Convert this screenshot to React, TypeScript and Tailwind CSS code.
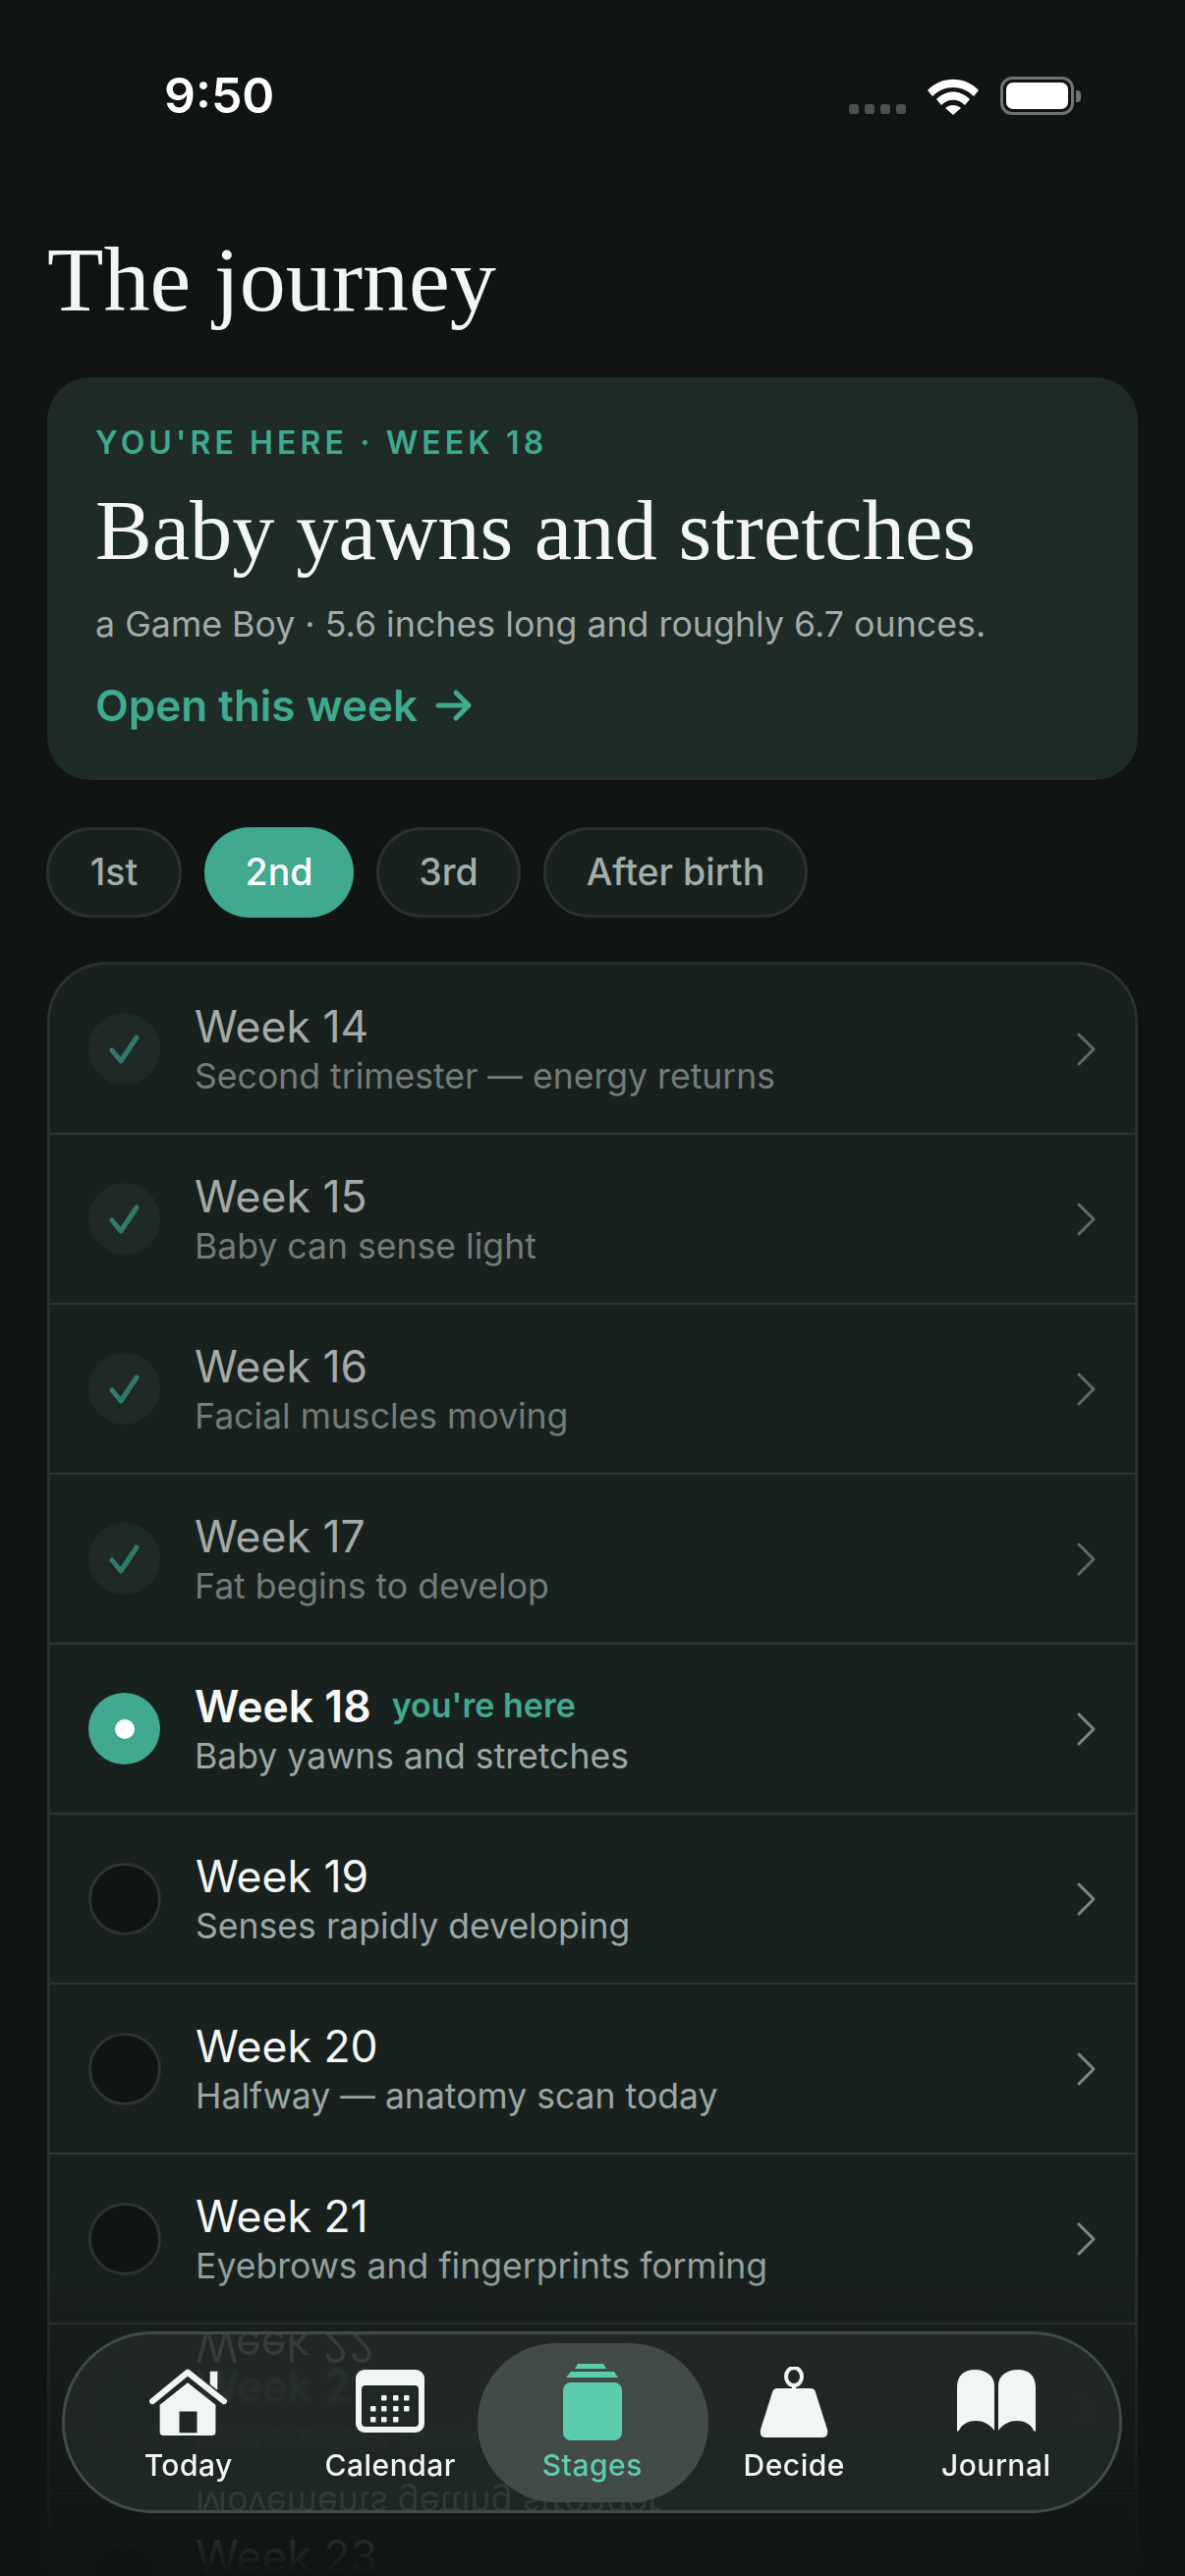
const inter = "font-['Inter',sans-serif]";

const weeks = [
  { n: 14, sub: "Second trimester — energy returns", state: "done" },
  { n: 15, sub: "Baby can sense light", state: "done" },
  { n: 16, sub: "Facial muscles moving", state: "done" },
  { n: 17, sub: "Fat begins to develop", state: "done" },
  { n: 18, sub: "Baby yawns and stretches", state: "current" },
  { n: 19, sub: "Senses rapidly developing", state: "next" },
  { n: 20, sub: "Halfway — anatomy scan today", state: "next" },
  { n: 21, sub: "Eyebrows and fingerprints forming", state: "next" },
  { n: 22, sub: "Movements getting stronger", state: "next" },
  { n: 23, sub: "Baby can hear your voice", state: "next" },
];

function StatusBar() {
  return (
    <div className="flex h-[200px] shrink-0 items-start justify-between pl-[167px] pr-[106px] pt-[68px]">
      <span className="text-[50px] font-semibold leading-[58px] text-white">9:50</span>
      <div className="mt-[10px] flex items-end">
        <div className="mb-[1px] flex gap-[6px]">
          <i className="h-[10px] w-[10px] rounded-[3px] bg-[#4c5150]" />
          <i className="h-[10px] w-[10px] rounded-[3px] bg-[#4c5150]" />
          <i className="h-[10px] w-[10px] rounded-[3px] bg-[#4c5150]" />
          <i className="h-[10px] w-[10px] rounded-[3px] bg-[#4c5150]" />
        </div>
        <svg className="ml-[22px]" width="52" height="38" viewBox="0 0 52 38" fill="#fff">
          <path d="M0 13C14-2 38-2 52 13l-5 6C35 7 17 7 5 19z" />
          <path d="M9 22c10-10 24-10 34 0l-5 6c-7-7-17-7-24 0z" />
          <path d="M18 31c5-4 11-4 16 0l-8 7z" />
        </svg>
        <div className="ml-[22px] flex items-center">
          <div className="h-[39px] w-[75px] rounded-[12px] border-[3.5px] border-[#6f7372] p-[3px]">
            <div className="h-full w-full rounded-[7px] bg-white" />
          </div>
          <div className="ml-[2px] h-[12px] w-[5px] rounded-r-[4px] bg-[#6f7372]" />
        </div>
      </div>
    </div>
  );
}

function Hero() {
  return (
    <div className="mx-[48px] mt-[42px] h-[410px] rounded-[44px] bg-[#1e2b27] px-[49px] pt-[47px]">
      <div className="text-[32px] font-semibold leading-[40px] tracking-[4.1px] text-[#40a98f]">
        YOU'RE HERE · WEEK 18
      </div>
      <div className="mt-[23px] font-['Liberation_Serif',serif] text-[86.5px] leading-[92px] text-[#f3f6f4]">
        Baby yawns and stretches
      </div>
      <div className="mt-[27px] text-[35.75px] leading-[44px] text-[#a1aca8]">
        a Game Boy · 5.6 inches long and roughly 6.7 ounces.
      </div>
      <div className="mt-[34px] flex items-center text-[44px] font-semibold leading-[54px] text-[#40a98f]">
        Open this week
        <svg className="ml-[18px]" width="38" height="34" viewBox="0 0 38 34" fill="none" stroke="#40a98f" strokeWidth="5" strokeLinecap="round" strokeLinejoin="round">
          <path d="M3 17h31M21 4l13 13-13 13" />
        </svg>
      </div>
    </div>
  );
}

function Pills() {
  const base = "flex h-[92px] items-center justify-center rounded-full text-[37.5px] font-medium";
  const idle = "border-[3px] border-[#2a3230] bg-[#19211f] text-[#a1aea9]";
  return (
    <div className="mx-[47px] mt-[48px] flex gap-[23px]">
      <div className={`${base} ${idle} w-[138px]`}>1st</div>
      <div className={`${base} w-[152px] bg-[#40a98f] text-white`}>2nd</div>
      <div className={`${base} ${idle} w-[147px]`}>3rd</div>
      <div className={`${base} ${idle} w-[269px]`}>After birth</div>
    </div>
  );
}

function Marker({ state }: { state: string }) {
  if (state === "done") {
    return (
      <div className="flex h-[73px] w-[73px] shrink-0 items-center justify-center rounded-full bg-[#1f2926]">
        <svg width="32" height="32" viewBox="0 0 32 32" fill="none" stroke="#2f7a6a" strokeWidth="5" strokeLinecap="round" strokeLinejoin="round">
          <path d="M3 17l9 11L28 4" />
        </svg>
      </div>
    );
  }
  if (state === "current") {
    return (
      <div className="flex h-[73px] w-[73px] shrink-0 items-center justify-center rounded-full bg-[#40a98f]">
        <div className="h-[20px] w-[20px] rounded-full bg-white" />
      </div>
    );
  }
  return <div className="h-[74px] w-[74px] shrink-0 rounded-full border-[3px] border-[#2c3432] bg-[#101514]" />;
}

function WeekRow({ n, sub, state }: { n: number; sub: string; state: string }) {
  const done = state === "done";
  return (
    <div className="flex h-[173px] shrink-0 items-center border-b-2 border-[#2e3634] pl-[39px] pr-[37px]">
      <Marker state={state} />
      <div className="ml-[35px] flex-1">
        <div className="flex items-baseline">
          <span className={`text-[44.5px] leading-[54px] ${state === "current" ? "font-semibold text-[#f5f8f6]" : done ? "text-[#a3aaa7]" : "text-[#f3f7f5]"}`}>
            Week {n}
          </span>
          {state === "current" && (
            <span className="ml-[21px] -translate-y-[5px] text-[34px] font-semibold leading-[40px] text-[#40a98f]">you're here</span>
          )}
        </div>
        <div className={`mt-[2px] text-[35.6px] leading-[44px] ${done ? "text-[#727c78]" : "text-[#9aa7a3]"}`}>{sub}</div>
      </div>
      <svg width="24" height="36" viewBox="0 0 24 36" fill="none" stroke={done ? "#5f6966" : "#7c8884"} strokeWidth="3" strokeLinecap="round" strokeLinejoin="round">
        <path d="M4 3l15 15L4 33" />
      </svg>
    </div>
  );
}

function HomeIcon() {
  return (
    <svg width="80" height="70" viewBox="0 0 84 74" fill="#f1f6f4">
      <path d="M65 4h8v20l-8-6z" />
      <path d="M3 36L41 5l39 31" fill="none" stroke="#f1f6f4" strokeWidth="6.5" strokeLinecap="round" strokeLinejoin="round" />
      <path fillRule="evenodd" d="M41 16l30 24v29a4 4 0 0 1-4 4H15a4 4 0 0 1-4-4V40zM32 47v23h19V47z" />
    </svg>
  );
}

function CalendarIcon() {
  const dots = [[26, 26], [38, 26], [49, 26], [15, 37], [26, 37], [38, 37], [49, 37], [15, 48], [26, 48], [38, 48]];
  return (
    <svg width="70" height="64" viewBox="0 0 70 64">
      <rect width="70" height="64" rx="9" fill="#f1f6f4" />
      <rect x="6" y="16" width="58" height="42" rx="4" fill="#212927" />
      {dots.map(([x, y]) => (
        <rect key={`${x}-${y}`} x={x} y={y} width="5.5" height="5.5" rx="1" fill="#f1f6f4" />
      ))}
    </svg>
  );
}

function StagesIcon() {
  return (
    <svg width="60" height="78" viewBox="0 0 60 78" fill="#5cccaf">
      <path d="M15 0h26l3 5H12z" />
      <path d="M8 8h44l4 6H3z" />
      <rect y="19" width="60" height="59" rx="8" />
    </svg>
  );
}

function DecideIcon() {
  return (
    <svg width="70" height="72" viewBox="0 0 70 72" fill="#f1f6f4">
      <ellipse cx="35" cy="10" rx="8" ry="9" fill="none" stroke="#f1f6f4" strokeWidth="4" />
      <path d="M33 18h4v6h-4z" />
      <path d="M18 22h34c3 0 4 1 5 4l12 38c1 5-1 8-5 8H6c-4 0-6-3-5-8l12-38c1-3 2-4 5-4z" />
    </svg>
  );
}

function JournalIcon() {
  return (
    <svg width="80" height="64" viewBox="0 0 80 64" fill="#f1f6f4">
      <path d="M0 18C0 6 7 0 18 0s20 6 20 16v46c-5-7-12-10-19-10S5 55 2 62c-1 1-2 1-2 0z" />
      <path d="M80 18C80 6 73 0 62 0S42 6 42 16v46c5-7 12-10 19-10s14 3 17 10c1 1 2 1 2 0z" />
    </svg>
  );
}

function NavItem({ label, active, children }: { label: string; active?: boolean; children: React.ReactNode }) {
  return (
    <div className="relative flex w-[205.5px] flex-col items-center">
      {active && <div className="absolute left-[-14px] right-[-15px] top-[-21px] h-[162px] rounded-[80px] bg-[#434b48]" />}
      <div className="relative flex h-[78px] items-end">{children}</div>
      <span className={`relative mt-[5px] text-[30px] font-medium leading-[40px] tracking-[0.5px] ${active ? "text-[#5cccaf]" : "text-[#f1f6f4]"}`}>
        {label}
      </span>
    </div>
  );
}

function BottomNav() {
  return (
    <div className="absolute bottom-[64px] left-[63px] h-[185px] w-[1079px] overflow-hidden rounded-[92px] border-[3px] border-[#3f4c48] bg-[#212927]/90 backdrop-blur-[2px]">
      {/* refraction ghosts of the rows passing under the glass */}
      <div className="absolute left-[133px] top-[-14px] -scale-y-100 text-[44px] leading-[54px] text-[#f3f7f5]/10">Week 22</div>
      <div className="absolute bottom-[-8px] left-[133px] -scale-y-100 text-[35.6px] leading-[30px] text-[#9aa7a3]/15">
        Movements getting stronger
      </div>
      <div className="flex pl-[23px] pt-[30px]">
        <NavItem label="Today"><div className="pb-[4px]"><HomeIcon /></div></NavItem>
        <NavItem label="Calendar"><div className="pb-[8px]"><CalendarIcon /></div></NavItem>
        <NavItem label="Stages" active><StagesIcon /></NavItem>
        <NavItem label="Decide"><div className="pb-[3px]"><DecideIcon /></div></NavItem>
        <NavItem label="Journal"><div className="pb-[8px]"><JournalIcon /></div></NavItem>
      </div>
    </div>
  );
}

export default function App() {
  return (
    <div className={`relative flex h-[2622px] w-[1206px] flex-col overflow-hidden bg-[#101514] ${inter}`}>
      <StatusBar />
      <h1 className="ml-[48px] mt-[26px] h-[116px] font-['Liberation_Serif',serif] text-[94px] font-normal leading-[116px] text-[#f3f6f4]">
        The journey
      </h1>
      <Hero />
      <Pills />
      <div className="mx-[48px] mt-[45px] flex flex-1 flex-col overflow-hidden rounded-t-[60px] border-x-[3px] border-t-[3px] border-[#2a3230] bg-[#19211f]">
        {weeks.map((w) => (
          <WeekRow key={w.n} n={w.n} sub={w.sub} state={w.state} />
        ))}
      </div>
      <div className="absolute inset-x-0 bottom-0 h-[330px] bg-gradient-to-b from-[#101514]/0 via-[#101514]/55 to-[#101514]" />
      <BottomNav />
    </div>
  );
}
